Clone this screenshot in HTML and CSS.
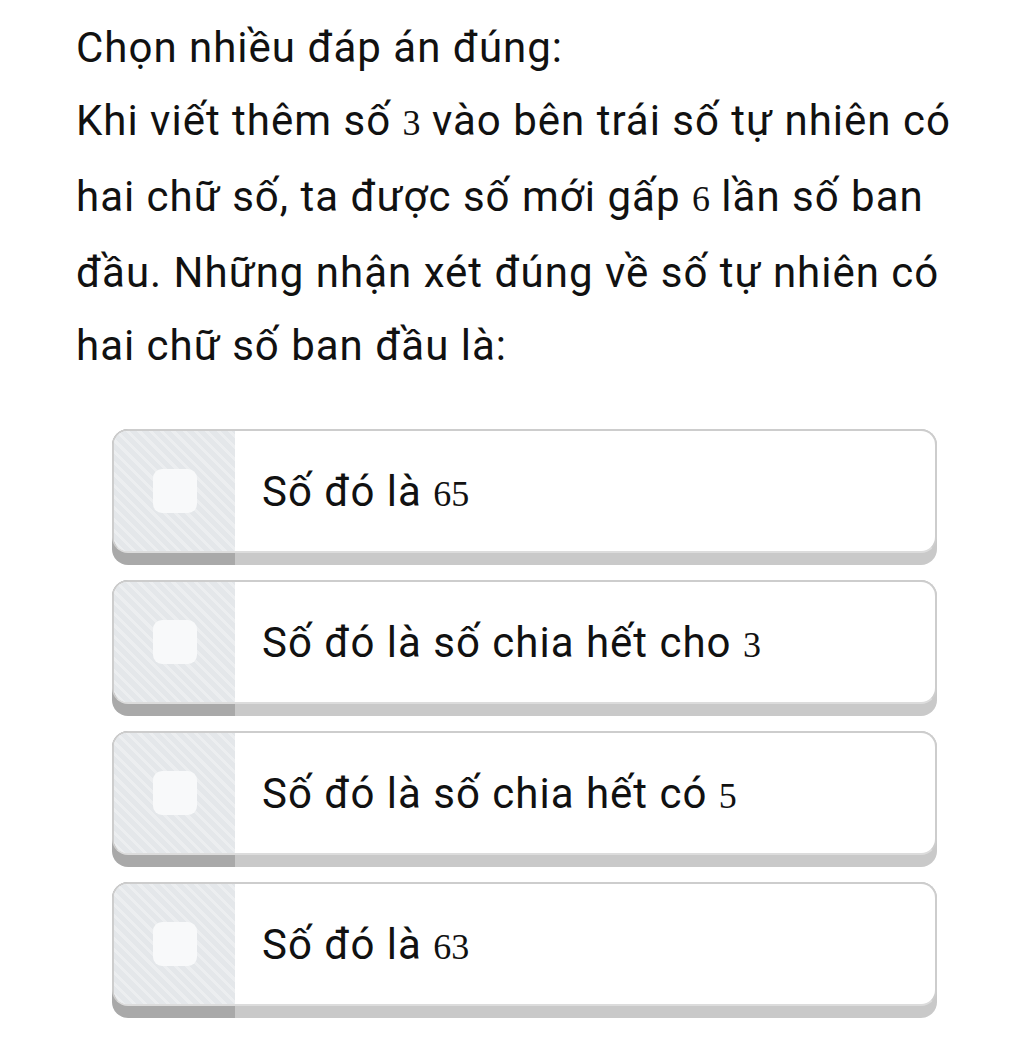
FILE: index.html
```html
<!DOCTYPE html>
<html lang="vi">

<head>
    <meta charset="UTF-8">
    <meta name="viewport" content="width=device-width, initial-scale=1.0">
    <title>Chọn nhiều đáp án đúng</title>
    <link rel="stylesheet" href="styles.css">
</head>

<body>
    <div class="question">
        <p class="title">Chọn nhiều đáp án đúng:</p>
        <p class="text">Khi viết thêm số <span class="num">3</span> vào bên trái số tự nhiên có hai chữ số, ta được số mới gấp <span class="num">6</span> lần số ban đầu. Những nhận xét đúng về số tự nhiên có hai chữ số ban đầu là:</p>
    </div>

    <div class="options">
        <div class="option">
            <div class="option-face">
                <div class="option-side"><span class="check"></span></div>
                <div class="option-body"><span>Số đó là <span class="num">65</span></span></div>
            </div>
        </div>
        <div class="option">
            <div class="option-face">
                <div class="option-side"><span class="check"></span></div>
                <div class="option-body"><span>Số đó là số chia hết cho <span class="num">3</span></span></div>
            </div>
        </div>
        <div class="option">
            <div class="option-face">
                <div class="option-side"><span class="check"></span></div>
                <div class="option-body"><span>Số đó là số chia hết có <span class="num">5</span></span></div>
            </div>
        </div>
        <div class="option">
            <div class="option-face">
                <div class="option-side"><span class="check"></span></div>
                <div class="option-body"><span>Số đó là <span class="num">63</span></span></div>
            </div>
        </div>
    </div>
</body>

</html>
```

FILE: styles.css
```css
body {
    margin: 0;
    background-color: #ffffff;
    font-family: Roboto, "Noto Sans", sans-serif;
    color: #111111;
}

.question {
    padding: 11px 0 0 76px;
    width: 890px;
    font-size: 42px;
    letter-spacing: 1px;
    line-height: 73px;
}

.question p {
    margin: 0;
}

/* so trong cong thuc */
.num {
    font-family: "Liberation Serif", serif;
    font-size: 36px;
    letter-spacing: 0;
}

.options {
    display: flex;
    flex-direction: column;
    gap: 15px;
    margin: 47px 0 0 112px;
    width: 825px;
}

.option {
    height: 136px;
    box-sizing: border-box;
    padding-bottom: 12px;
    border-radius: 16px;
    /* franja inferior: mas oscura bajo el panel izquierdo */
    background: linear-gradient(to right, #a9a9a9 123px, #c9c9c9 123px);
}

.option-face {
    display: flex;
    height: 100%;
    box-sizing: border-box;
    border: 2px solid #cdcdcd;
    border-bottom-color: #dcdcdc;
    border-radius: 16px;
    overflow: hidden;
    background-color: #ffffff;
}

.option-side {
    width: 121px;
    display: flex;
    align-items: center;
    justify-content: center;
    background-color: #e4e7ea;
    background-image: repeating-linear-gradient(45deg, #e4e7ea 0, #e4e7ea 5px, #eceef0 5px, #eceef0 8px);
}

.check {
    width: 44px;
    height: 44px;
    border-radius: 9px;
    background-color: #f8f9fa;
}

.option-body {
    flex: 1;
    display: flex;
    align-items: center;
    padding-left: 27px;
    font-size: 42px;
    letter-spacing: 1px;
}
```
